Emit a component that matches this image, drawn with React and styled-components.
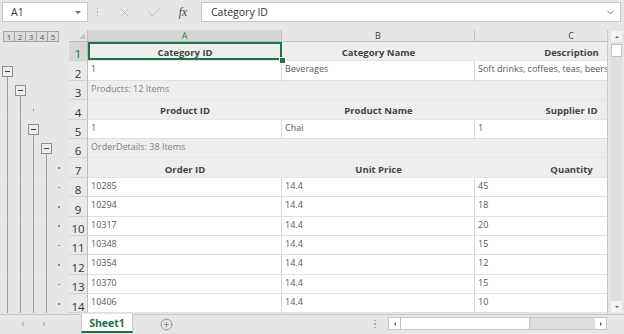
import React from "react";
import styled, { createGlobalStyle, css } from "styled-components";
import { X, Check, ChevronDown, CirclePlus } from "lucide-react";

const GREEN = "#217346";
const COLS = "19px 194px 193px 193px";
const ROW_H = "19.4px";

const GlobalStyle = createGlobalStyle`
  body {
    margin: 0;
    background: #e6e6e6;
  }
`;

const Frame = styled.div`
  width: 624px;
  height: 334px;
  display: flex;
  flex-direction: column;
  background: #e6e6e6;
  font-family: "Open Sans", "Noto Sans", sans-serif;
  color: #444;
  overflow: hidden;
`;

/* formula bar */

const FormulaBar = styled.div`
  height: 30px;
  flex: none;
  display: flex;
  align-items: flex-start;
  padding: 2px 3px 0 2px;
  box-sizing: border-box;
`;

const Field = styled.div`
  height: 20px;
  box-sizing: border-box;
  border: 1px solid #c8c8c8;
  background: #fff;
  display: flex;
  align-items: center;
  justify-content: space-between;
  font-size: 10.5px;
  color: #333;
`;

const NameBox = styled(Field)`
  width: 86px;
  padding: 0 6px 0 8px;
`;

const FormulaInput = styled(Field)`
  flex: 1;
  margin-left: 2px;
  padding: 0 4px 0 9px;
`;

const Grip = styled.div`
  width: ${({ $w }) => $w}px;
  height: ${({ $h }) => $h}px;
  display: flex;
  flex-direction: column;
  align-items: center;
  justify-content: center;
  gap: 2px;
  flex: none;

  span {
    width: 1.5px;
    height: 1.5px;
    background: #a9a9a9;
  }
`;

const FxGroup = styled.div`
  width: 92px;
  height: 20px;
  display: flex;
  align-items: center;
  color: #b8b8b8;
`;

const FxSlot = styled.div`
  width: ${({ $w }) => $w}px;
  display: flex;
  justify-content: center;
  align-items: center;
`;

const FxLabel = styled.span`
  font-family: "Liberation Serif", serif;
  font-style: italic;
  font-size: 11.5px;
  color: #444;
`;

const Triangle = styled.span`
  width: 0;
  height: 0;
  border-left: ${({ $s }) => $s}px solid transparent;
  border-right: ${({ $s }) => $s}px solid transparent;
  ${({ $up, $c, $s }) =>
    $up
      ? css`border-bottom: ${$s}px solid ${$c};`
      : css`border-top: ${$s}px solid ${$c};`}
`;

const SideTriangle = styled.span`
  width: 0;
  height: 0;
  border-top: ${({ $s }) => $s}px solid transparent;
  border-bottom: ${({ $s }) => $s}px solid transparent;
  ${({ $left, $c, $s }) =>
    $left
      ? css`border-right: ${$s}px solid ${$c};`
      : css`border-left: ${$s}px solid ${$c};`}
`;

/* body */

const Body = styled.div`
  height: 284px;
  flex: none;
  display: flex;
`;

const Outline = styled.div`
  width: 69px;
  flex: none;
  display: flex;
  flex-direction: column;
`;

const LevelBar = styled.div`
  height: 12px;
  flex: none;
  box-sizing: border-box;
  padding: 1px 0 0 3px;
  display: flex;
`;

const LevelButton = styled.div`
  width: 12px;
  height: 11px;
  box-sizing: border-box;
  margin-right: -1px;
  border: 1px solid #a4a4a4;
  background: #dcdcdc;
  font-size: 8px;
  line-height: 9px;
  text-align: center;
  color: #555;
`;

const OutlineRow = styled.div`
  height: ${ROW_H};
  flex: none;
  display: grid;
  grid-template-columns: repeat(5, 12.75px);
  padding-left: 1.5px;
`;

const OutlineSlot = styled.div`
  display: flex;
  align-items: center;
  justify-content: center;
  ${({ $kind }) =>
    $kind === "line" &&
    css`background: linear-gradient(#9d9d9d, #9d9d9d) center / 1px 100% no-repeat;`}
  ${({ $kind }) =>
    $kind === "minus" &&
    css`background: linear-gradient(#9d9d9d, #9d9d9d) center bottom / 1px 50% no-repeat;`}
`;

const MinusBox = styled.div`
  width: 11px;
  height: 11px;
  box-sizing: border-box;
  border: 1px solid #8e8e8e;
  background: #ececec;
  display: flex;
  align-items: center;
  justify-content: center;

  &::before {
    content: "";
    width: 5px;
    height: 1px;
    background: #404040;
  }
`;

const Dot = styled.span`
  width: 1.5px;
  height: 1.5px;
  background: #8a8a8a;
`;

const Sheet = styled.div`
  width: 538px;
  flex: none;
  overflow: hidden;
  display: flex;
  flex-direction: column;
`;

const HeadRow = styled.div`
  height: 12px;
  flex: none;
  display: grid;
  grid-template-columns: ${COLS};
`;

const Corner = styled.div`
  box-sizing: border-box;
  border-right: 1px solid #c0c0c0;
  border-bottom: 1px solid #bdbdbd;
  background: #e6e6e6;
  display: flex;
  align-items: flex-end;
  justify-content: flex-end;
  padding: 0 2px 2px 0;

  &::before {
    content: "";
    border-left: 6px solid transparent;
    border-bottom: 6px solid #c4c4c4;
  }
`;

const ColHead = styled.div`
  box-sizing: border-box;
  border-right: 1px solid #c0c0c0;
  border-bottom: 1px solid #bdbdbd;
  background: ${({ $active }) => ($active ? "#d6d6d6" : "#e6e6e6")};
  color: ${({ $active }) => ($active ? GREEN : "#444")};
  font-size: 9px;
  line-height: 11px;
  text-align: center;
`;

const Row = styled.div`
  height: ${ROW_H};
  flex: none;
  display: grid;
  grid-template-columns: ${COLS};
`;

const RowNum = styled.div`
  box-sizing: border-box;
  border-right: 1px solid #bdbdbd;
  border-bottom: 1px solid #d2d2d2;
  background: ${({ $active }) => ($active ? "#d6d6d6" : "#e9e9e9")};
  color: ${({ $active }) => ($active ? GREEN : "#333")};
  font-size: 11.5px;
  line-height: 1;
  display: flex;
  align-items: center;
  justify-content: center;
  padding-top: 6px;
  overflow: hidden;
`;

const Cell = styled.div`
  position: relative;
  box-sizing: border-box;
  white-space: nowrap;
  ${({ $variant }) =>
    $variant === "header"
      ? css`
          background: #eeeeee;
          border-bottom: 1px solid #e6e6e6;
          font-weight: 700;
          font-size: 9.5px;
          color: #444;
          display: flex;
          align-items: center;
          justify-content: center;
          padding-top: 3px;
        `
      : css`
          background: #fff;
          border-right: 1px solid #d9d9d9;
          border-bottom: 1px solid #e0e0e0;
          font-size: 9px;
          color: #595959;
          padding: 1px 0 0 3px;
          overflow: hidden;
        `}
  ${({ $selected }) =>
    $selected &&
    css`
      box-shadow: inset 0 0 0 2px ${GREEN};
      z-index: 1;
    `}
`;

const Handle = styled.span`
  position: absolute;
  right: -3px;
  bottom: -3px;
  width: 5px;
  height: 5px;
  box-sizing: border-box;
  background: ${GREEN};
  outline: 1px solid #fff;
`;

const Caption = styled.div`
  grid-column: 2 / -1;
  background: #eeeeee;
  border-bottom: 1px solid #e6e6e6;
  font-size: 9px;
  color: #7f7f7f;
  padding: 1px 0 0 3px;
  white-space: nowrap;
`;

const VScroll = styled.div`
  width: 15px;
  flex: none;
  box-sizing: border-box;
  border-left: 1px solid #c8c8c8;
  padding: 1px 0 2px 3px;
  display: flex;
  flex-direction: column;
`;

const ScrollButton = styled.div`
  height: ${({ $h }) => $h}px;
  flex: none;
  display: flex;
  align-items: center;
  justify-content: center;
  background: #f4f4f4;
`;

const VTrack = styled.div`
  flex: 1;
  background: #dedede;
  padding-top: 2px;
`;

const VThumb = styled.div`
  height: 13px;
  box-sizing: border-box;
  border: 1px solid #c2c2c2;
  background: #fff;
`;

/* tabs */

const TabBar = styled.div`
  height: 20px;
  flex: none;
  display: flex;
  align-items: flex-start;
  box-shadow: inset 0 1px 0 #c8c8c8;
`;

const NavArea = styled.div`
  width: 81px;
  height: 20px;
  display: flex;
  align-items: center;
  padding-left: 21px;
  box-sizing: border-box;
  gap: 19px;
`;

const SheetTab = styled.div`
  width: 52px;
  height: 19px;
  box-sizing: border-box;
  background: #fff;
  border-left: 1px solid #c8c8c8;
  border-right: 1px solid #c8c8c8;
  border-bottom: 2px solid ${GREEN};
  color: ${GREEN};
  font-weight: 700;
  font-size: 10.5px;
  display: flex;
  align-items: center;
  justify-content: center;
`;

const AddSheet = styled.div`
  margin-left: 27px;
  height: 20px;
  display: flex;
  align-items: center;
  color: #7a7a7a;
`;

const Spacer = styled.div`
  flex: 1;
`;

const HScroll = styled.div`
  width: 219px;
  height: 13px;
  margin: 3px 17px 0 7px;
  box-sizing: border-box;
  border: 1px solid #c8c8c8;
  background: #dedede;
  display: flex;
`;

const HButton = styled.div`
  width: 11px;
  background: #fff;
  display: flex;
  align-items: center;
  justify-content: center;
`;

const HThumb = styled.div`
  width: 130px;
  box-sizing: border-box;
  border-left: 1px solid #c2c2c2;
  border-right: 1px solid #c2c2c2;
  background: #fff;
`;

const rows = [
  { type: "header", cells: ["Category ID", "Category Name", "Description"], selected: true },
  { type: "data", cells: ["1", "Beverages", "Soft drinks, coffees, teas, beers"] },
  { type: "caption", text: "Products: 12 Items" },
  { type: "header", cells: ["Product ID", "Product Name", "Supplier ID"] },
  { type: "data", cells: ["1", "Chai", "1"] },
  { type: "caption", text: "OrderDetails: 38 Items" },
  { type: "header", cells: ["Order ID", "Unit Price", "Quantity"] },
  { type: "data", cells: ["10285", "14.4", "45"] },
  { type: "data", cells: ["10294", "14.4", "18"] },
  { type: "data", cells: ["10317", "14.4", "20"] },
  { type: "data", cells: ["10348", "14.4", "15"] },
  { type: "data", cells: ["10354", "14.4", "12"] },
  { type: "data", cells: ["10370", "14.4", "15"] },
  { type: "data", cells: ["10406", "14.4", "10"] },
];

const deep = ["line", "line", "line", "line", "dot"];
const outline = [
  [],
  ["minus"],
  ["line", "minus"],
  ["line", "line", "dot"],
  ["line", "line", "minus"],
  ["line", "line", "line", "minus"],
  deep, deep, deep, deep, deep, deep, deep, deep,
];

const Dots = ({ w, h }) => (
  <Grip $w={w} $h={h}>
    <span />
    <span />
    <span />
  </Grip>
);

const App = () => (
  <Frame>
    <GlobalStyle />
    <FormulaBar>
      <NameBox>
        A1
        <Triangle $s={3} $c="#6f6f6f" />
      </NameBox>
      <Dots w={19} h={20} />
      <FxGroup>
        <FxSlot $w={34}>
          <X size={15} strokeWidth={1.4} />
        </FxSlot>
        <FxSlot $w={26}>
          <Check size={17} strokeWidth={1.4} />
        </FxSlot>
        <FxSlot $w={32}>
          <FxLabel>fx</FxLabel>
        </FxSlot>
      </FxGroup>
      <FormulaInput>
        Category ID
        <ChevronDown size={11} strokeWidth={2} color="#6a6a6a" />
      </FormulaInput>
    </FormulaBar>

    <Body>
      <Outline>
        <LevelBar>
          {[1, 2, 3, 4, 5].map((n) => (
            <LevelButton key={n}>{n}</LevelButton>
          ))}
        </LevelBar>
        {outline.map((slots, i) => (
          <OutlineRow key={i}>
            {[0, 1, 2, 3, 4].map((j) => {
              const kind = slots[j] || "none";
              return (
                <OutlineSlot key={j} $kind={kind}>
                  {kind === "minus" && <MinusBox />}
                  {kind === "dot" && <Dot />}
                </OutlineSlot>
              );
            })}
          </OutlineRow>
        ))}
      </Outline>

      <Sheet>
        <HeadRow>
          <Corner />
          <ColHead $active>A</ColHead>
          <ColHead>B</ColHead>
          <ColHead>C</ColHead>
        </HeadRow>
        {rows.map((row, i) => (
          <Row key={i}>
            <RowNum $active={i === 0}>{i + 1}</RowNum>
            {row.type === "caption" ? (
              <Caption>{row.text}</Caption>
            ) : (
              row.cells.map((text, j) => (
                <Cell key={j} $variant={row.type} $selected={row.selected && j === 0}>
                  {text}
                  {row.selected && j === 0 && <Handle />}
                </Cell>
              ))
            )}
          </Row>
        ))}
      </Sheet>

      <VScroll>
        <ScrollButton $h={11}>
          <Triangle $up $s={2.5} $c="#606060" />
        </ScrollButton>
        <VTrack>
          <VThumb />
        </VTrack>
        <ScrollButton $h={11}>
          <Triangle $s={2.5} $c="#606060" />
        </ScrollButton>
      </VScroll>
    </Body>

    <TabBar>
      <NavArea>
        <SideTriangle $left $s={3} $c="#bdbdbd" />
        <SideTriangle $s={3} $c="#bdbdbd" />
      </NavArea>
      <SheetTab>Sheet1</SheetTab>
      <AddSheet>
        <CirclePlus size={13} strokeWidth={1.4} />
      </AddSheet>
      <Spacer />
      <Dots w={12} h={20} />
      <HScroll>
        <HButton>
          <SideTriangle $left $s={2.5} $c="#606060" />
        </HButton>
        <HThumb />
        <Spacer />
        <HButton>
          <SideTriangle $s={2.5} $c="#606060" />
        </HButton>
      </HScroll>
    </TabBar>
  </Frame>
);

export default App;
